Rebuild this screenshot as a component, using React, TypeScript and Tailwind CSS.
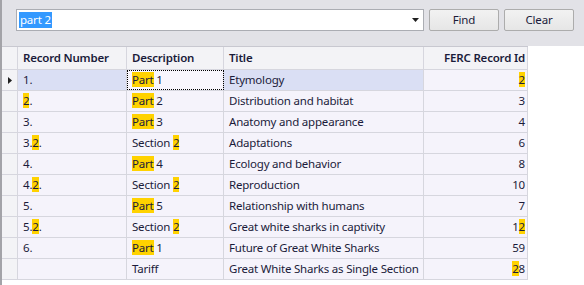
import React from "react";

type Seg = string | { hl: string };

type Row = {
  num: Seg[];
  desc: Seg[];
  title: string;
  ferc: Seg[];
};

const rows: Row[] = [
  { num: ["1."], desc: [{ hl: "Part" }, " 1"], title: "Etymology", ferc: [{ hl: "2" }] },
  { num: [{ hl: "2" }, "."], desc: [{ hl: "Part" }, " 2"], title: "Distribution and habitat", ferc: ["3"] },
  { num: ["3."], desc: [{ hl: "Part" }, " 3"], title: "Anatomy and appearance", ferc: ["4"] },
  { num: ["3.", { hl: "2" }, "."], desc: ["Section ", { hl: "2" }], title: "Adaptations", ferc: ["6"] },
  { num: ["4."], desc: [{ hl: "Part" }, " 4"], title: "Ecology and behavior", ferc: ["8"] },
  { num: ["4.", { hl: "2" }, "."], desc: ["Section ", { hl: "2" }], title: "Reproduction", ferc: ["10"] },
  { num: ["5."], desc: [{ hl: "Part" }, " 5"], title: "Relationship with humans", ferc: ["7"] },
  { num: ["5.", { hl: "2" }, "."], desc: ["Section ", { hl: "2" }], title: "Great white sharks in captivity", ferc: ["1", { hl: "2" }] },
  { num: ["6."], desc: [{ hl: "Part" }, " 1"], title: "Future of Great White Sharks", ferc: ["59"] },
  { num: [], desc: ["Tariff"], title: "Great White Sharks as Single Section", ferc: [{ hl: "2" }, "8"] },
];

function Text({ segs }: { segs: Seg[] }) {
  return (
    <span className="whitespace-pre">
      {segs.map((s, i) =>
        typeof s === "string" ? (
          s
        ) : (
          <span key={i} className="bg-[#ffd200]">
            {s.hl}
          </span>
        )
      )}
    </span>
  );
}

const cell = "h-full flex items-center px-[5px] border-r border-[#d6d6de] whitespace-nowrap overflow-hidden";

export default function App() {
  return (
    <div
      className="w-[584px] h-[285px] bg-white flex text-[11.5px] tracking-[-0.2px] text-[#1b1b3a]"
      style={{ fontFamily: '"Segoe UI", "Noto Sans", sans-serif' }}
    >
      <div className="w-[2px] bg-[#a3a3a8]" />
      <div className="flex-1 flex flex-col">
        {/* search bar */}
        <div className="h-[46px] bg-[#e2e2e7] flex items-start pt-[9px] pl-[14px] gap-[5px]">
          <div className="w-[408px] h-[22px] bg-white border border-[#abadb3] flex items-center pl-[2px] pr-[4px]">
            <span className="bg-[#3399ff] text-white leading-[16px] px-[1px]">part 2</span>
            <div className="flex-1" />
            <svg width="7" height="4" viewBox="0 0 7 4">
              <path d="M0 0h7L3.5 4z" fill="#1f1f1f" />
            </svg>
          </div>
          <button className="w-[70px] h-[22px] rounded-[2px] border border-[#acacac] bg-gradient-to-b from-[#f2f2f2] to-[#e6e6e6] flex items-center justify-center">
            Find
          </button>
          <button className="w-[70px] h-[22px] rounded-[2px] border border-[#acacac] bg-gradient-to-b from-[#f2f2f2] to-[#e6e6e6] flex items-center justify-center">
            Clear
          </button>
        </div>

        {/* grid */}
        <div className="flex flex-col w-[526px]">
          <div className="flex h-[24px] bg-[#f3f3f6] border-b border-[#d6d6de] border-t border-t-[#c8c8d0] font-semibold">
            <div className={`${cell} w-[16px] px-0`} />
            <div className={`${cell} w-[109px]`}>Record Number</div>
            <div className={`${cell} w-[97px]`}>Description</div>
            <div className={`${cell} w-[200px]`}>Title</div>
            <div className={`${cell} w-[104px] justify-end pr-[2px]`}>FERC Record Id</div>
          </div>
          {rows.map((r, i) => {
            const sel = i === 0;
            return (
              <div key={i} className="flex h-[21px] bg-[#f5f3fb] border-b border-[#d6d6de]">
                <div className={`${cell} w-[16px] px-0 justify-center bg-[#f3f3f6]`}>
                  {sel && (
                    <svg width="4" height="7" viewBox="0 0 4 7">
                      <path d="M0 0v7l4-3.5z" fill="#1f1f1f" />
                    </svg>
                  )}
                </div>
                <div className={`${cell} w-[109px] ${sel ? "bg-[#dadff4]" : ""}`}>
                  <Text segs={r.num} />
                </div>
                <div
                  className={`${cell} w-[97px] ${
                    sel ? "bg-[#f8f6fd] outline outline-1 outline-dotted outline-black -outline-offset-1" : ""
                  }`}
                >
                  <Text segs={r.desc} />
                </div>
                <div className={`${cell} w-[200px] ${sel ? "bg-[#dadff4]" : ""}`}>{r.title}</div>
                <div className={`${cell} w-[104px] justify-end pr-[2px]`}>
                  <Text segs={r.ferc} />
                </div>
              </div>
            );
          })}
        </div>
      </div>
    </div>
  );
}
